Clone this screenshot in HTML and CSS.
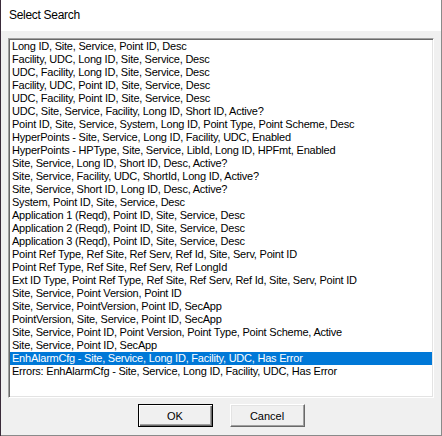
FILE: index.html
```html
<!DOCTYPE html>
<html lang="en">
<head>
  <meta charset="UTF-8">
  <title>Select Search</title>
  <link rel="stylesheet" href="styles.css">
</head>
<body>
  <div class="window">
    <div class="titlebar">Select Search</div>

    <div class="dialog">
      <ul class="listbox">
        <li>Long ID, Site, Service, Point ID, Desc</li>
        <li>Facility, UDC, Long ID, Site, Service, Desc</li>
        <li>UDC, Facility, Long ID, Site, Service, Desc</li>
        <li>Facility, UDC, Point ID, Site, Service, Desc</li>
        <li>UDC, Facility, Point ID, Site, Service, Desc</li>
        <li>UDC, Site, Service, Facility, Long ID, Short ID, Active?</li>
        <li>Point ID, Site, Service, System, Long ID, Point Type, Point Scheme, Desc</li>
        <li>HyperPoints - Site, Service, Long ID, Facility, UDC, Enabled</li>
        <li>HyperPoints - HPType, Site, Service, LibId, Long ID, HPFmt, Enabled</li>
        <li>Site, Service, Long ID, Short ID, Desc, Active?</li>
        <li>Site, Service, Facility, UDC, ShortId, Long ID, Active?</li>
        <li>Site, Service, Short ID, Long ID, Desc, Active?</li>
        <li>System, Point ID, Site, Service, Desc</li>
        <li>Application 1 (Reqd), Point ID, Site, Service, Desc</li>
        <li>Application 2 (Reqd), Point ID, Site, Service, Desc</li>
        <li>Application 3 (Reqd), Point ID, Site, Service, Desc</li>
        <li>Point Ref Type, Ref Site, Ref Serv, Ref Id, Site, Serv, Point ID</li>
        <li>Point Ref Type, Ref Site, Ref Serv, Ref LongId</li>
        <li>Ext ID Type, Point Ref Type, Ref Site, Ref Serv, Ref Id, Site, Serv, Point ID</li>
        <li>Site, Service, Point Version, Point ID</li>
        <li>Site, Service, PointVersion, Point ID, SecApp</li>
        <li>PointVersion, Site, Service, Point ID, SecApp</li>
        <li>Site, Service, Point ID, Point Version, Point Type, Point Scheme, Active</li>
        <li>Site, Service, Point ID, SecApp</li>
        <li class="selected">EnhAlarmCfg - Site, Service, Long ID, Facility, UDC, Has Error</li>
        <li>Errors: EnhAlarmCfg - Site, Service, Long ID, Facility, UDC, Has Error</li>
      </ul>

      <div class="buttons">
        <button class="btn default">OK</button>
        <button class="btn">Cancel</button>
      </div>
    </div>
  </div>
</body>
</html>
```

FILE: styles.css
```css
html, body {
  margin: 0;
  padding: 0;
  background: #3a2b3a;
}

.window {
  width: 440px;
  height: 435px;
  margin-left: 1px;
  background: #f0f0f0;
  border-right: 1px solid #8a8a8a;
  border-bottom: 1px solid #8a8a8a;
  display: flex;
  flex-direction: column;
}

.titlebar {
  height: 31px;
  background: #fff;
  padding-left: 8px;
  font-family: "Liberation Sans", Arial, sans-serif;
  font-size: 12px;
  line-height: 31px;
  letter-spacing: -0.3px;
  color: #000;
}

.dialog {
  padding: 7px 0 0 7px;
  flex: 1;
}

.listbox {
  list-style: none;
  margin: 0;
  padding: 0;
  width: 422px;
  height: 356px;
  background: #fff;
  border-top: 1px solid #a0a0a0;
  border-left: 1px solid #a0a0a0;
  border-right: 1px solid #fff;
  border-bottom: 1px solid #fff;
  box-shadow: inset 1px 1px 0 #696969, inset -1px -1px 0 #e3e3e3;
  padding: 1px;
  font-family: "Liberation Sans", Arial, sans-serif;
  font-size: 11px;
  line-height: 13px;
  letter-spacing: -0.22px;
  color: #000;
  overflow: hidden;
}

.listbox li {
  height: 13px;
  padding-left: 2px;
  white-space: nowrap;
}

.listbox li.selected {
  background: #0078d7;
  color: #fff;
}

.buttons {
  display: flex;
  justify-content: center;
  gap: 17px;
  margin-top: 6px;
  padding-right: 7px;
}

.btn {
  width: 75px;
  height: 23px;
  padding: 0;
  background: #f0f0f0;
  border-top: 1px solid #fff;
  border-left: 1px solid #fff;
  border-right: 1px solid #696969;
  border-bottom: 1px solid #696969;
  box-shadow: inset -1px -1px 0 #a0a0a0, inset 1px 1px 0 #e3e3e3;
  font-family: "Liberation Sans", Arial, sans-serif;
  font-size: 11px;
  color: #000;
}

.btn.default {
  border: 1px solid #000;
  box-shadow: inset 1px 1px 0 #fff, inset -1px -1px 0 #696969, inset -2px -2px 0 #a0a0a0;
}
```
